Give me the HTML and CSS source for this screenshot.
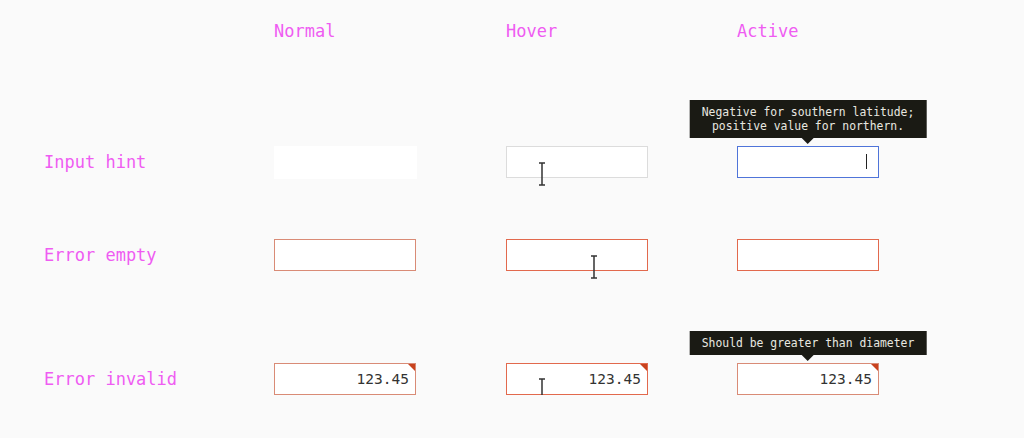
FILE: index.html
```html
<!DOCTYPE html>
<html lang="en">
<head>
  <meta charset="UTF-8" />
  <meta name="viewport" content="width=device-width, initial-scale=1.0"/>
  <title>Input states</title>
  <link rel="stylesheet" href="styles.css">
</head>
<body>
  <div class="board">
    <div class="row head">
      <span></span>
      <span class="title">Normal</span>
      <span class="title">Hover</span>
      <span class="title">Active</span>
    </div>

    <div class="row row-hint">
      <span class="label">Input hint</span>
      <div class="cell"><div class="field plain"></div></div>
      <div class="cell">
        <div class="field hover"></div>
        <svg class="ibeam ib-1" width="8" height="24" viewBox="0 0 8 24"><path d="M1 1h6M1 23h6M4 1v22" stroke="#333" stroke-width="1.5" fill="none"/></svg>
      </div>
      <div class="cell">
        <div class="tip">Negative for southern latitude;<br>positive value for northern.</div>
        <div class="field active"><span class="caret"></span></div>
      </div>
    </div>

    <div class="row row-empty">
      <span class="label">Error empty</span>
      <div class="cell"><div class="field error"></div></div>
      <div class="cell">
        <div class="field error strong"></div>
        <svg class="ibeam ib-2" width="8" height="24" viewBox="0 0 8 24"><path d="M1 1h6M1 23h6M4 1v22" stroke="#333" stroke-width="1.5" fill="none"/></svg>
      </div>
      <div class="cell"><div class="field error strong"></div></div>
    </div>

    <div class="row row-invalid">
      <span class="label">Error invalid</span>
      <div class="cell"><div class="field error flag">123.45</div></div>
      <div class="cell">
        <div class="field error strong flag">123.45</div>
        <svg class="ibeam ib-3" width="8" height="24" viewBox="0 0 8 24"><path d="M1 1h6M1 23h6M4 1v22" stroke="#333" stroke-width="1.5" fill="none"/></svg>
      </div>
      <div class="cell">
        <div class="tip">Should be greater than diameter</div>
        <div class="field error flag">123.45</div>
      </div>
    </div>
  </div>
</body>
</html>
```

FILE: styles.css
```css
body {
  margin: 0;
  background: #fafafa;
  font-family: "DejaVu Sans Mono", "Liberation Mono", monospace;
}
.board {
  padding-left: 44px;
}
.row {
  display: grid;
  grid-template-columns: 230px 232px 231px 231px;
  align-items: center;
}
.head {
  height: 62px;
}
.row-hint {
  margin-top: 84px;
  height: 32px;
}
.row-empty {
  margin-top: 61px;
  height: 32px;
}
.row-invalid {
  margin-top: 92px;
  height: 32px;
}
.title, .label {
  color: #ef5cf2;
  font-size: 17px;
}
.cell {
  position: relative;
  height: 32px;
}
.field {
  box-sizing: border-box;
  width: 142px;
  height: 32px;
  background: #fff;
  border: 1px solid transparent;
  position: relative;
  text-align: right;
  padding: 0 6px;
  font-size: 14.5px;
  line-height: 30px;
  color: #333;
}
.plain {
  height: 33px;
  width: 143px;
}
.hover {
  border-color: #dcdcdc;
}
.active {
  border-color: #4f74d9;
}
.error {
  border-color: #d98b76;
}
.strong {
  border-color: #e2694d;
}
.flag::after {
  content: "";
  position: absolute;
  top: 0;
  right: 0;
  border-top: 7px solid #c8421e;
  border-left: 7px solid transparent;
}
.caret {
  position: absolute;
  right: 11px;
  top: 7px;
  width: 1.5px;
  height: 15px;
  background: #222;
}
.tip {
  position: absolute;
  bottom: 40px;
  left: 71px;
  transform: translateX(-50%);
  background: #1a1a14;
  color: #e8e8e0;
  font-size: 11.4px;
  line-height: 14px;
  padding: 5px 12px;
  white-space: nowrap;
  text-align: center;
}
.tip::after {
  content: "";
  position: absolute;
  left: 50%;
  bottom: -6px;
  margin-left: -6px;
  border-top: 6px solid #1a1a14;
  border-left: 6px solid transparent;
  border-right: 6px solid transparent;
}
.ibeam {
  position: absolute;
}
.ib-1 {
  left: 32px;
  top: 16px;
}
.ib-2 {
  left: 84px;
  top: 16px;
}
.ib-3 {
  left: 32px;
  top: 15px;
}
```
